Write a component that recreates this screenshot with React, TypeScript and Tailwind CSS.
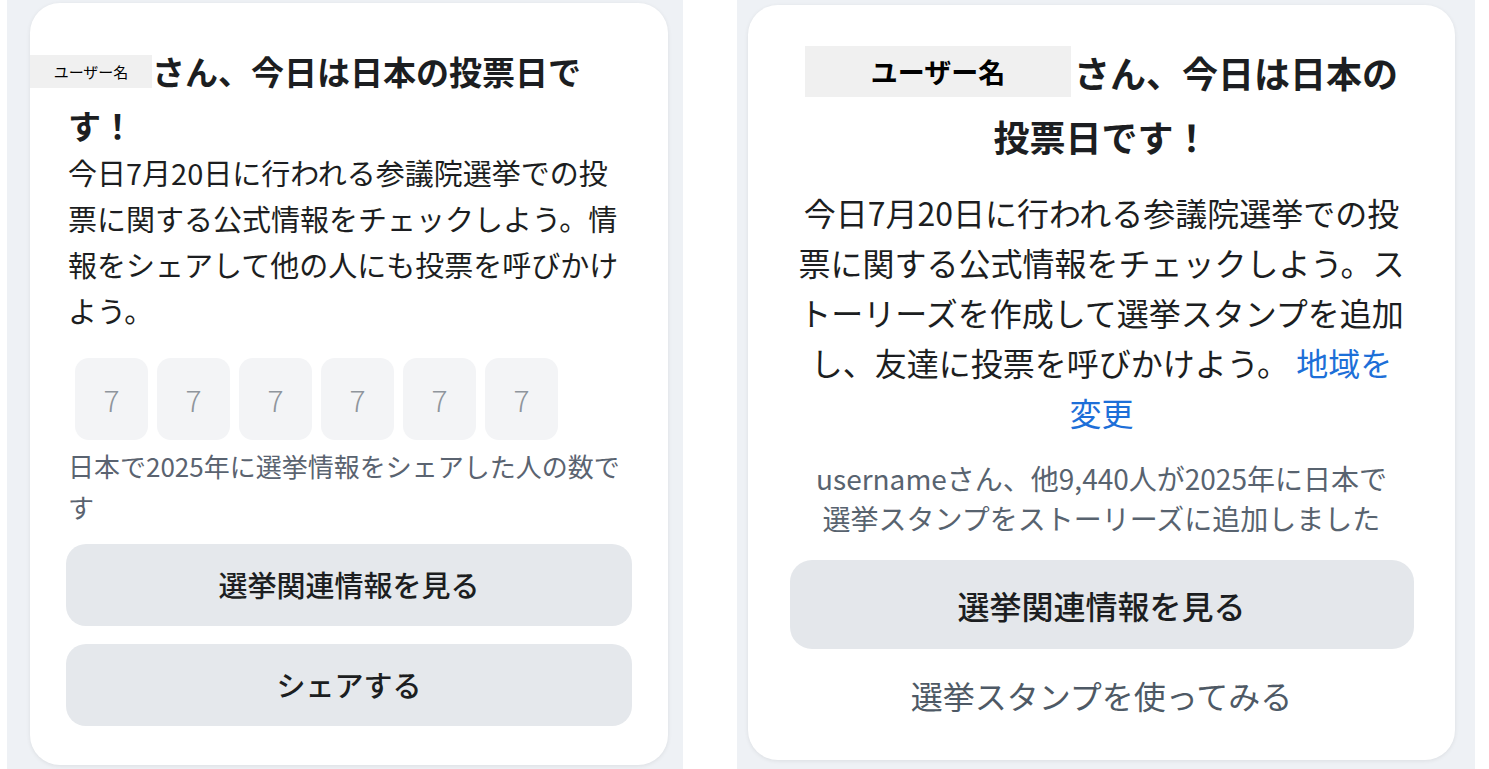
import React from "react";

const digits = ["7", "7", "7", "7", "7", "7"];

const LeftCard: React.FC = () => {
  return (
    <div className="w-[638px] h-[762px] rounded-[30px] bg-white pt-[41px] pl-[38px] pr-[36px] shadow-[0_1px_4px_rgba(0,0,0,0.08)]">
      <h2 className="text-[33px] font-bold leading-[54px] text-[#1c1e21]">
        <span className="-ml-[38px] mt-[11px] inline-block h-[33px] w-[122px] bg-[#f0f0f0] text-center align-top text-[15px] font-normal leading-[33px] text-black">
          ユーザー名
        </span>
        さん、今日は日本の投票日です！
      </h2>
      <p className="-mt-[3px] text-[29px] leading-[46px] text-[#1c1e21]">
        今日7月20日に行われる参議院選挙での投票に関する公式情報をチェックしよう。情報をシェアして他の人にも投票を呼びかけよう。
      </p>
      <div className="ml-[7px] mt-[25px] flex gap-[9px]">
        {digits.map((d, i) => (
          <div
            key={i}
            className="flex h-[82px] w-[73px] items-center justify-center rounded-[14px] bg-[#f3f4f6] text-[30px] font-light text-[#8f959c]"
          >
            {d}
          </div>
        ))}
      </div>
      <p className="mt-[5px] w-[560px] text-[26px] leading-[41px] text-[#5a6370]">
        日本で2025年に選挙情報をシェアした人の数です
      </p>
      <button className="-ml-[2px] mt-[17px] flex h-[82px] w-[566px] items-center justify-center rounded-[20px] bg-[#e5e8ec] text-[29px] font-medium text-[#1c1e21]">
        選挙関連情報を見る
      </button>
      <button className="-ml-[2px] mt-[18px] flex h-[82px] w-[566px] items-center justify-center rounded-[20px] bg-[#e5e8ec] text-[29px] font-medium text-[#1c1e21]">
        シェアする
      </button>
    </div>
  );
};

const RightCard: React.FC = () => {
  return (
    <div className="flex w-[707px] h-[755px] flex-col items-center rounded-[30px] bg-white pt-[35px] shadow-[0_1px_4px_rgba(0,0,0,0.08)]">
      <h2 className="w-[610px] text-center text-[36px] font-bold leading-[64px] text-[#1c1e21]">
        <span className="mr-[3px] mt-[6px] inline-block h-[51px] w-[266px] bg-[#f0f0f0] text-center align-top text-[27px] leading-[51px] text-black">
          ユーザー名
        </span>
        さん、今日は日本の投票日です！
      </h2>
      <p className="mt-[19px] w-[611px] text-center text-[32px] leading-[50px] text-[#1c1e21]">
        今日7月20日に行われる参議院選挙での投票に関する公式情報をチェックしよう。ストーリーズを作成して選挙スタンプを追加し、友達に投票を呼びかけよう。{" "}
        <span className="text-[#1d6fd8]">地域を変更</span>
      </p>
      <p className="mt-[21px] w-[575px] text-center text-[28px] leading-[40px] text-[#58636f]">
        usernameさん、他9,440人が2025年に日本で選挙スタンプをストーリーズに追加しました
      </p>
      <button className="mt-[22px] flex h-[89px] w-[624px] items-center justify-center rounded-[22px] bg-[#e4e7eb] text-[32px] font-medium text-[#1c1e21]">
        選挙関連情報を見る
      </button>
      <p className="mt-[22px] text-[32px] leading-[48px] text-[#4e5965]">
        選挙スタンプを使ってみる
      </p>
    </div>
  );
};

export default function App() {
  return (
    <div className="flex h-[769px] w-[1489px] bg-white font-['Noto_Sans_CJK_JP','Noto_Sans',sans-serif]">
      <div className="ml-[7px] w-[676px] bg-[#eef1f5] pl-[23px] pt-[3px]">
        <LeftCard />
      </div>
      <div className="ml-[54px] w-[738px] bg-[#eef1f5] pl-[11px] pt-[5px]">
        <RightCard />
      </div>
    </div>
  );
}
